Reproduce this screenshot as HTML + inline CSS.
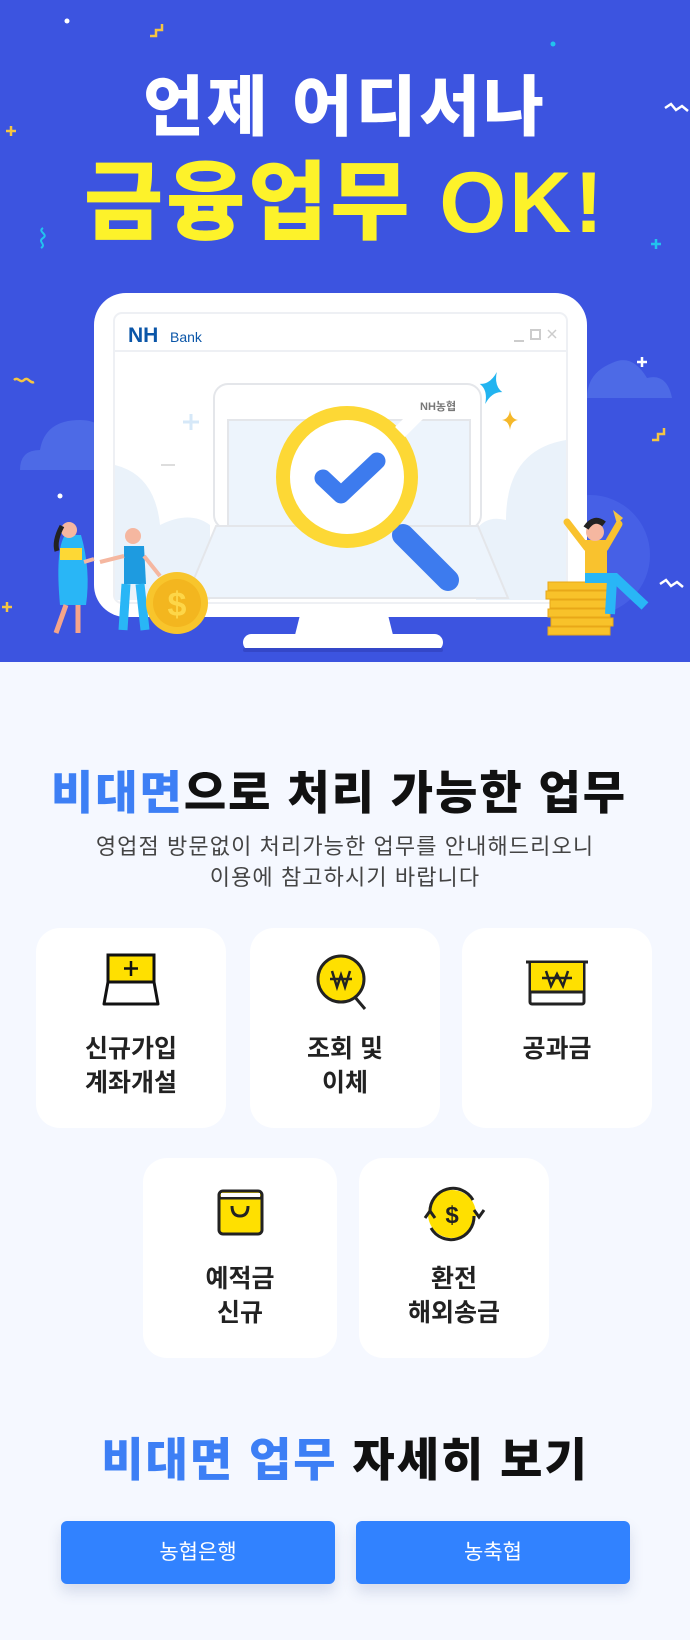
<!DOCTYPE html>
<html><head><meta charset="utf-8"><style>
*{margin:0;padding:0;box-sizing:border-box}
body{width:690px;height:1640px;background:#F5F8FF;position:relative;overflow:hidden;font-family:"Liberation Sans","Noto Sans CJK KR",sans-serif}
.hero{position:absolute;left:0;top:0;width:690px;height:662px;background:#3C54E0;overflow:hidden}
.t1{position:absolute;left:0;width:690px;text-align:center;font-weight:900;color:#fff;font-size:66px;top:62px;letter-spacing:3px;line-height:90px}
.t2{position:absolute;left:0;width:690px;text-align:center;font-weight:900;color:#FDF22A;font-size:86px;top:148px;letter-spacing:3px;line-height:110px}
.h{position:absolute;left:0;width:690px;text-align:center;font-weight:900;font-size:46px;color:#111;letter-spacing:2px}
.b{color:#3D7FF5}
.sub{position:absolute;left:0;top:831px;width:690px;text-align:center;font-size:22px;line-height:31px;color:#444;letter-spacing:1.1px}
.card{position:absolute;background:#fff;border-radius:24px;width:190px;height:200px}
.card .tx{position:absolute;left:0;width:100%;text-align:center;font-weight:700;font-size:25px;line-height:34px;color:#222;top:104px}
.card svg{position:absolute;left:0;top:0}
.btn{position:absolute;top:1521px;height:63px;width:274px;background:#3182FF;border-radius:6px;color:#fff;font-size:21px;text-align:center;line-height:63px;box-shadow:0 8px 14px rgba(40,60,120,.15)}
</style></head><body>
<div class="hero">
<svg width="690" height="662" style="position:absolute;left:0;top:0">
 <circle cx="67" cy="21" r="2.5" fill="#fff"/>
 <circle cx="553" cy="44" r="2.5" fill="#22c3ee"/>
 <circle cx="60" cy="496" r="2.5" fill="#fff"/>
 <path d="M150 36 h6 v-6 h6 v-6" stroke="#F5C542" stroke-width="2.5" fill="none"/>
 <path d="M652 440 h6 v-6 h6 v-6" stroke="#F5C542" stroke-width="2.5" fill="none"/>
 <path d="M6 131h10M11 126v10" stroke="#F5C542" stroke-width="2.5"/>
 <path d="M2 607h10M7 602v10" stroke="#F5C542" stroke-width="2.5"/>
 <path d="M651 244h10M656 239v10" stroke="#22c3ee" stroke-width="2.5"/>
 <path d="M637 362h10M642 357v10" stroke="#fff" stroke-width="2.5"/>
 <path d="M665 108l6-4 5 6 6-4 6 5" stroke="#fff" stroke-width="2.5" fill="none"/>
 <path d="M660 584l6-4 5 6 6-4 6 5" stroke="#fff" stroke-width="2.5" fill="none"/>
 <path d="M43 228c-6 4 6 6 0 10c-6 4 4 6 -2 10" stroke="#22c3ee" stroke-width="2" fill="none"/>
 <path d="M14 380c4-4 6 4 10 0c4-4 6 4 10 2" stroke="#F5C542" stroke-width="2.5" fill="none"/>
 <path d="M20 470 q0-20 20-20 q5-30 40-30 q25 0 35 25 q15 0 15 25z" fill="#4D6AE6"/>
 <path d="M587 398 q0-25 25-35 q20-10 35 15 q20-5 25 20z" fill="#4D6AE6"/>
 <circle cx="590" cy="555" r="60" fill="#4660E6"/>
 <rect x="94" y="293" width="493" height="324" rx="32" fill="#fff"/>
 <path d="M300 615 h88 l6 24 h-100z" fill="#fff"/>
 <rect x="243" y="634" width="200" height="17" rx="8.5" fill="#fff"/>
 <rect x="243" y="648" width="200" height="4" rx="2" fill="#3447C8"/>
 <rect x="114" y="313" width="453" height="290" rx="8" fill="#fff" stroke="#EEF0F4" stroke-width="2"/>
 <line x1="114" y1="351" x2="567" y2="351" stroke="#EEF0F4" stroke-width="2"/>
 <path d="M115 465 q40 10 45 60 q30-15 50 0 v75 h-95z" fill="#EAF2FA"/>
 <path d="M566 440 q-60 10 -60 80 q-20-5-30 10 v70 h90z" fill="#EAF2FA"/>
 <text x="128" y="342" font-family="Liberation Sans" font-weight="700" font-size="21" fill="#0B56A8">NH</text>
 <text x="170" y="342" font-family="Liberation Sans" font-size="14" fill="#0B56A8">Bank</text>
 <path d="M514 341h10" stroke="#ccc" stroke-width="2"/>
 <rect x="531" y="330" width="9" height="9" fill="none" stroke="#ccc" stroke-width="2"/>
 <path d="M548 330l8 8M556 330l-8 8" stroke="#ccc" stroke-width="1.5"/>
 <rect x="214" y="384" width="267" height="145" rx="14" fill="#fff" stroke="#E4E6EA" stroke-width="2"/>
 <rect x="228" y="420" width="242" height="106" fill="#EDF4FC" stroke="#E4E6EA" stroke-width="2"/>
 <path d="M216 526 h262 l30 72 h-322z" fill="#EDF4FC" stroke="#E4E6EA" stroke-width="2"/>
 <text x="420" y="410" font-family="Liberation Sans,Noto Sans CJK KR,sans-serif" font-weight="700" font-size="11" fill="#777">NH농협</text>
 <path d="M183 422h16M191 414v16" stroke="#D6E8F8" stroke-width="3"/>
 <path d="M161 465h14" stroke="#ddd" stroke-width="2"/>
 <path d="M491 371 q2 14 12 17 q-10 3-12 17 q-2-14-12-17 q10-3 12-17z" fill="#22B4F0" transform="rotate(20 491 388)"/>
 <path d="M510 410 q1 9 8 10 q-7 1-8 10 q-1-9-8-10 q7-1 8-10z" fill="#F5B82A"/>
 <line x1="403" y1="535" x2="448" y2="580" stroke="#3D7BEE" stroke-width="22" stroke-linecap="round"/>
 <circle cx="347" cy="477" r="64" fill="#fff" stroke="#FDD835" stroke-width="14"/>
 <path d="M400 432 l18-18" stroke="#fff" stroke-width="14"/>
 <path d="M323 478 l18 17 l36-34" stroke="#3D7BEE" stroke-width="17" fill="none" stroke-linecap="round" stroke-linejoin="round"/>
 <path d="M65 535 q-10 15-5 70 h26 q5-35-5-70z" fill="#29B6F6"/>
 <circle cx="69" cy="530" r="8" fill="#F5B7A0"/>
 <path d="M62 526 q-8 15-5 25" stroke="#222" stroke-width="5" fill="none"/>
 <path d="M66 605 l-10 28 M78 605 l0 28" stroke="#F5A48A" stroke-width="5"/>
 <path d="M60 548 h22 v12 h-22z" fill="#FDD835"/>
 <path d="M84 562 l10-3" stroke="#F5B7A0" stroke-width="4"/>
 <circle cx="133" cy="536" r="8" fill="#F5B7A0"/>
 <path d="M124 546 h20 l2 38 h-22z" fill="#1E9BE0"/>
 <path d="M126 584 l-3 46 M140 584 l5 46" stroke="#29B6F6" stroke-width="9"/>
 <path d="M124 556 l-24 6 M144 556 l16 20" stroke="#F5B7A0" stroke-width="4"/>
 <circle cx="177" cy="603" r="31" fill="#F8C52C"/>
 <circle cx="177" cy="603" r="24" fill="#F3B61F"/>
 <text x="177" y="616" text-anchor="middle" font-family="Liberation Sans" font-weight="700" font-size="34" fill="#FDD648">$</text>
 <g fill="#F8C22A" stroke="#E8A818" stroke-width="1">
  <rect x="548" y="582" width="62" height="8"/><rect x="546" y="591" width="62" height="8"/>
  <rect x="550" y="600" width="62" height="8"/><rect x="548" y="609" width="62" height="8"/>
  <rect x="551" y="618" width="62" height="8"/><rect x="548" y="627" width="62" height="8"/>
 </g>
 <path d="M585 540 h22 v40 h-22z" fill="#F9C22E"/>
 <path d="M587 548 l-20-26 M605 548 l14-24" stroke="#F9C22E" stroke-width="7" stroke-linecap="round"/>
 <circle cx="595" cy="532" r="9" fill="#F5B7A0"/>
 <path d="M586 528 q8-12 18-4" stroke="#222" stroke-width="6" fill="none"/>
 <path d="M585 578 h30 l30 28" stroke="#29B6F6" stroke-width="10" fill="none"/>
 <path d="M612 580 l-2 34" stroke="#29B6F6" stroke-width="10"/>
 <path d="M613 510 l10 8 l-6 6z" fill="#F5C542"/>
</svg>
<div class="t1">언제 어디서나</div>
<div class="t2">금융업무 OK!</div>
</div>

<div class="h" style="top:757px;left:-6px"><span class="b">비대면</span>으로 처리 가능한 업무</div>
<div class="sub">영업점 방문없이 처리가능한 업무를 안내해드리오니<br>이용에 참고하시기 바랍니다</div>

<div class="card" style="left:36px;top:928px">
 <svg width="190" height="100"><rect x="72" y="27" width="46" height="27" fill="#FFE000" stroke="#111" stroke-width="3"/><path d="M95 33v15M88 40.5h14" stroke="#111" stroke-width="2.5"/><path d="M72 54h46l4 22h-54z" fill="#fff" stroke="#111" stroke-width="3" stroke-linejoin="round"/></svg>
 <div class="tx">신규가입<br>계좌개설</div>
</div>
<div class="card" style="left:250px;top:928px">
 <svg width="190" height="100"><path d="M104 68l11 13" stroke="#222" stroke-width="3"/><circle cx="91" cy="51" r="23" fill="#FFE000" stroke="#222" stroke-width="3"/><path d="M82 43l5 16l4-12l4 12l5-16M80 51h22" stroke="#222" stroke-width="2.5" fill="none"/></svg>
 <div class="tx">조회 및<br>이체</div>
</div>
<div class="card" style="left:462px;top:928px">
 <svg width="190" height="100"><path d="M64 34h62" stroke="#222" stroke-width="3"/><rect x="68" y="34" width="54" height="42" fill="#fff" stroke="#222" stroke-width="3" rx="2"/><rect x="69" y="35" width="52" height="29" fill="#FFE000"/><path d="M69 64h52" stroke="#222" stroke-width="3"/><path d="M84 43l5 15l6-12l6 12l5-15M80 50h30" stroke="#222" stroke-width="2.5" fill="none"/></svg>
 <div class="tx">공과금</div>
</div>
<div class="card" style="left:143px;top:1158px;width:194px">
 <svg width="194" height="100"><rect x="76" y="33" width="43" height="43" rx="4" fill="#FFE000" stroke="#222" stroke-width="3"/><path d="M77 40h41" stroke="#222" stroke-width="3"/><rect x="78" y="35" width="39" height="4" fill="#fff"/><path d="M89 48q0 10 8 10q8 0 8-10" stroke="#222" stroke-width="3" fill="none"/></svg>
 <div class="tx">예적금<br>신규</div>
</div>
<div class="card" style="left:359px;top:1158px">
 <svg width="190" height="100"><circle cx="93" cy="56" r="24" fill="#FFE000"/><path d="M71 54a23 23 0 0 1 43-12" stroke="#222" stroke-width="3" fill="none"/><path d="M115 58a23 23 0 0 1-43 12" stroke="#222" stroke-width="3" fill="none"/><path d="M66 60l5-7 5 7M115 52l5 7 5-7" stroke="#222" stroke-width="3" fill="none"/><text x="93" y="65" text-anchor="middle" font-family="Liberation Sans" font-weight="700" font-size="24" fill="#222">$</text></svg>
 <div class="tx">환전<br>해외송금</div>
</div>

<div class="h" style="top:1424px"><span class="b">비대면 업무</span> 자세히 보기</div>
<div class="btn" style="left:61px">농협은행</div>
<div class="btn" style="left:356px">농축협</div>
</body></html>
